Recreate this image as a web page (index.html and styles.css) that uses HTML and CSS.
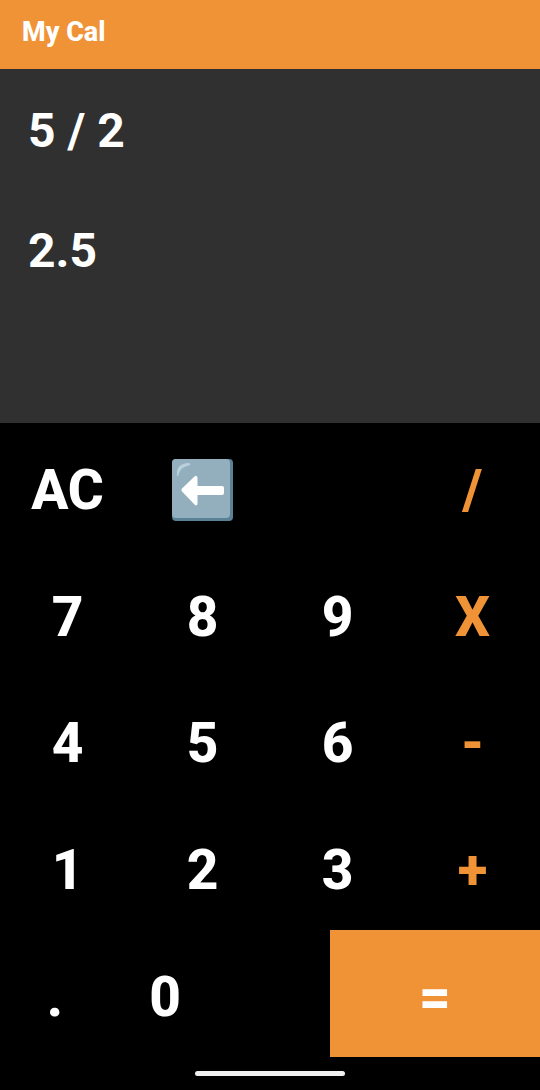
FILE: index.html
```
<!DOCTYPE html>
<html lang="en">
<head>
<meta charset="utf-8">
<meta name="viewport" content="width=device-width, initial-scale=1">
<title>My Cal</title>
<link rel="stylesheet" href="styles.css">
</head>
<body>
<div class="app">
  <header class="bar"><h1 class="title">My Cal</h1></header>
  <section class="display">
    <p class="line">5 / 2</p>
    <output class="line">2.5</output>
  </section>
  <main class="keys">
    <div class="row">
      <button class="key">AC</button>
      <button class="key" aria-label="Backspace">
        <svg class="back" viewBox="0 0 62 62" aria-hidden="true">
          <rect x="0" y="0" width="61" height="62" rx="4" fill="#5b8196"/>
          <rect x="0" y="0" width="58" height="59" rx="4" fill="#93afbe"/>
          <path d="M5 17C4 9 8 4 17 4q3 1 0 2.500C10 8 8 11 6 17z" fill="#b9cfd9"/>
          <path d="M10 32.500q-1.500-1.500 0-3L22.500 17.500q3-2 3 2V27H50q2 0 2 2v5q0 2-2 2H25.500v8q0 4-3 1.500z" fill="#fff"/>
        </svg>
      </button>
      <span class="gap"></span>
      <button class="key op">/</button>
    </div>
    <div class="row">
      <button class="key">7</button><button class="key">8</button><button class="key">9</button><button class="key op">X</button>
    </div>
    <div class="row">
      <button class="key">4</button><button class="key">5</button><button class="key">6</button><button class="key op">-</button>
    </div>
    <div class="row">
      <button class="key">1</button><button class="key">2</button><button class="key">3</button><button class="key op">+</button>
    </div>
    <div class="row last">
      <button class="key">.</button><button class="key">0</button><span class="gap"></span><button class="key equals">=</button>
    </div>
  </main>
  <footer class="nav"><span class="handle"></span></footer>
</div>
</body>
</html>
```
FILE: styles.css
```
* { box-sizing: border-box; }
body {
  margin: 0;
  background: #000;
  color: #fff;
  font-family: Roboto, "Liberation Sans", sans-serif;
  font-weight: 700;
}
.app {
  display: grid;
  grid-template-rows: auto 354fr 634fr auto;
  min-height: 100vh;
}
.bar { background: #f09336; padding: 16px 22px 21px; }
.title { margin: 0; font-size: 27px; line-height: 32px; font-weight: 800; }
.display {
  display: flex;
  flex-direction: column;
  gap: 64px;
  padding: 34px 28px;
  background: #303030;
}
.line { display: block; margin: 0; font-size: 48px; line-height: 56px; }
.keys { display: grid; grid-auto-rows: 1fr; }
.row { display: grid; grid-template-columns: repeat(4, 1fr); }
.last { grid-template-columns: 11fr 11fr 11fr 21fr; }
.key {
  display: flex;
  align-items: center;
  justify-content: center;
  margin: 0;
  padding: 7px 0 0;
  border: 0;
  background: none;
  color: inherit;
  font: inherit;
  font-size: 55px;
  font-weight: 800;
  line-height: 64px;
}
.op { color: #f09336; }
.equals { background: #f09336; color: #fff; }
.back { width: 62px; height: 62px; }
.nav { display: flex; justify-content: center; padding: 14px 0; }
.handle { width: 150px; height: 5px; border-radius: 3px; background: #f0f0f0; }
```
